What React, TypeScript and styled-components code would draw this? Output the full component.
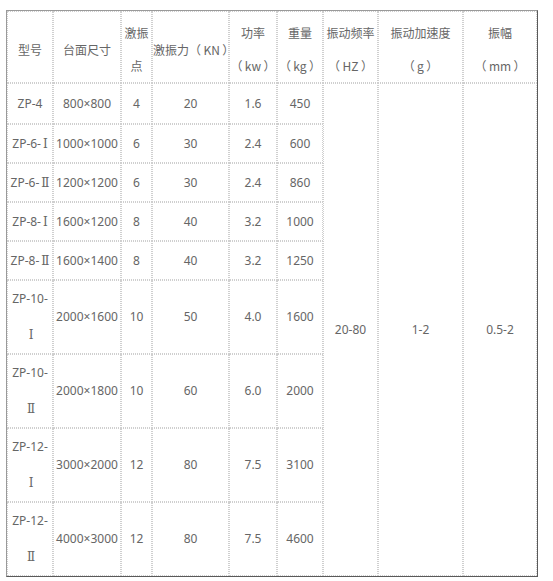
import React from 'react';
import styled, { createGlobalStyle } from 'styled-components';

const GlobalStyle = createGlobalStyle`
  html, body {
    margin: 0;
    padding: 0;
    background: #ffffff;
  }
`;

const Page = styled.div`
  padding: 10px 0 0 6px;
  font-family: 'Noto Sans', 'Noto Sans CJK TC', sans-serif;
  font-size: 12px;
  color: #666666;
`;

const SpecTable = styled.table`
  box-sizing: border-box;
  width: 532px;
  table-layout: fixed;
  border-collapse: separate;
  border-spacing: 0;
  border-style: solid;
  border-width: 1px;
  border-color: #9a9a9a #5a5a5a #5a5a5a #9a9a9a;
`;

const HeadCell = styled.th<{ $width: number }>`
  box-sizing: border-box;
  width: ${(p) => p.$width}px;
  height: 72px;
  padding: 4px 0 0;
  border: 1px dotted #cfcfcf;
  font-family: 'Noto Sans CJK TC', sans-serif;
  font-weight: normal;
  line-height: 33px;
  text-align: center;
  vertical-align: middle;
  white-space: nowrap;
`;

const Cell = styled.td<{ $tall?: boolean }>`
  box-sizing: border-box;
  height: ${(p) => (p.$tall ? 41 : 39)}px;
  padding: 0;
  border: 1px dotted #cfcfcf;
  line-height: 36px;
  text-align: center;
  vertical-align: middle;
  white-space: nowrap;
`;

const Numeral = styled.span`
  font-family: 'DejaVu Serif', 'Liberation Serif', serif;
  font-size: 12px;
  line-height: 1;
  padding-left: 2px;
`;

const columns: { width: number; lines: string[] }[] = [
  { width: 46, lines: ['型号'] },
  { width: 68, lines: ['台面尺寸'] },
  { width: 31, lines: ['激振', '点'] },
  { width: 77, lines: ['激振力（\u2009KN\u2009）'] },
  { width: 48, lines: ['功率', '（\u2009kw\u2009）'] },
  { width: 46, lines: ['重量', '（\u2009kg\u2009）'] },
  { width: 55, lines: ['振动频率', '（\u2009HZ\u2009）'] },
  { width: 85, lines: ['振动加速度', '（\u2009g\u2009）'] },
  { width: 74, lines: ['振幅', '（\u2009mm\u2009）'] },
];

type Row = {
  model: string;
  numeral?: string;
  wrap?: boolean;
  size: string;
  points: string;
  force: string;
  power: string;
  weight: string;
};

const rows: Row[] = [
  { model: 'ZP-4', size: '800×800', points: '4', force: '20', power: '1.6', weight: '450' },
  { model: 'ZP-6-', numeral: 'Ⅰ', size: '1000×1000', points: '6', force: '30', power: '2.4', weight: '600' },
  { model: 'ZP-6-', numeral: 'Ⅱ', size: '1200×1200', points: '6', force: '30', power: '2.4', weight: '860' },
  { model: 'ZP-8-', numeral: 'Ⅰ', size: '1600×1200', points: '8', force: '40', power: '3.2', weight: '1000' },
  { model: 'ZP-8-', numeral: 'Ⅱ', size: '1600×1400', points: '8', force: '40', power: '3.2', weight: '1250' },
  { model: 'ZP-10-', numeral: 'Ⅰ', wrap: true, size: '2000×1600', points: '10', force: '50', power: '4.0', weight: '1600' },
  { model: 'ZP-10-', numeral: 'Ⅱ', wrap: true, size: '2000×1800', points: '10', force: '60', power: '6.0', weight: '2000' },
  { model: 'ZP-12-', numeral: 'Ⅰ', wrap: true, size: '3000×2000', points: '12', force: '80', power: '7.5', weight: '3100' },
  { model: 'ZP-12-', numeral: 'Ⅱ', wrap: true, size: '4000×3000', points: '12', force: '80', power: '7.5', weight: '4600' },
];

const shared = { frequency: '20-80', acceleration: '1-2', amplitude: '0.5-2' };

const ModelName = ({ row }: { row: Row }) => (
  <>
    {row.model}
    {row.wrap && <br />}
    {row.numeral && <Numeral>{row.numeral}</Numeral>}
  </>
);

export default function App() {
  return (
    <>
      <GlobalStyle />
      <Page>
        <SpecTable>
          <thead>
            <tr>
              {columns.map((col) => (
                <HeadCell key={col.lines.join('')} $width={col.width}>
                  {col.lines.map((line, i) => (
                    <React.Fragment key={line}>
                      {i > 0 && <br />}
                      {line}
                    </React.Fragment>
                  ))}
                </HeadCell>
              ))}
            </tr>
          </thead>
          <tbody>
            {rows.map((row, index) => (
              <tr key={row.model + (row.numeral ?? '')}>
                <Cell $tall={index === 0}>
                  <ModelName row={row} />
                </Cell>
                <Cell>{row.size}</Cell>
                <Cell>{row.points}</Cell>
                <Cell>{row.force}</Cell>
                <Cell>{row.power}</Cell>
                <Cell>{row.weight}</Cell>
                {index === 0 && (
                  <>
                    <Cell rowSpan={rows.length}>{shared.frequency}</Cell>
                    <Cell rowSpan={rows.length}>{shared.acceleration}</Cell>
                    <Cell rowSpan={rows.length}>{shared.amplitude}</Cell>
                  </>
                )}
              </tr>
            ))}
          </tbody>
        </SpecTable>
      </Page>
    </>
  );
}
